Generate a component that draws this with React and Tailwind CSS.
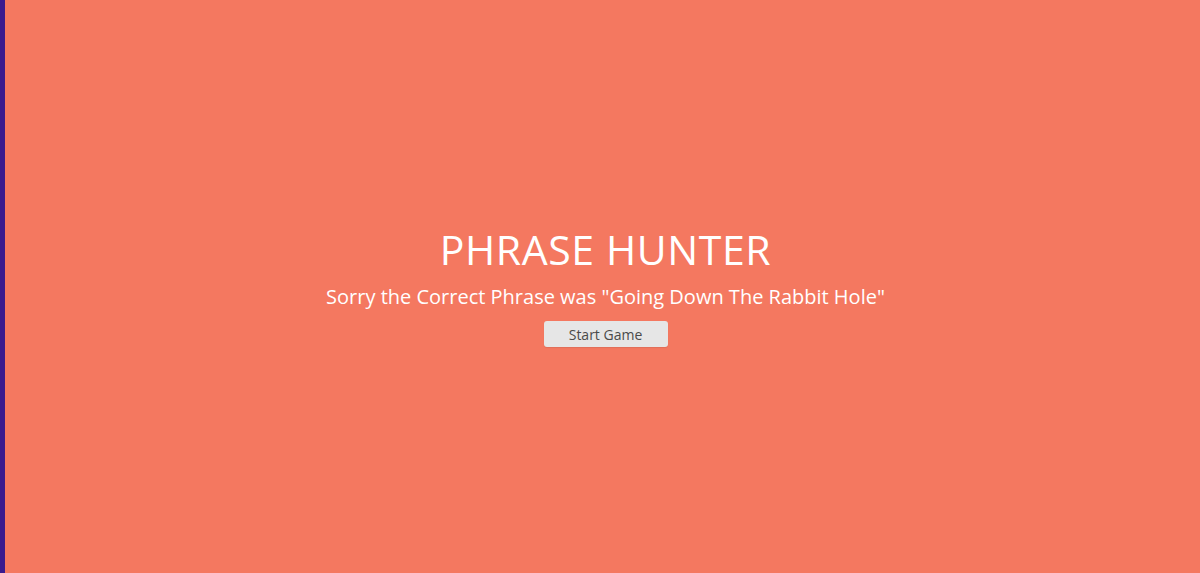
import React from "react";

const App = () => {
  return (
    <div className="flex h-[573px] w-full bg-[#3a1a8e]">
      {/* overlay */}
      <div
        className="ml-[5px] flex flex-1 flex-col items-center justify-center bg-[#f47860] pl-[6px] text-white"
        style={{ fontFamily: '"Open Sans", "DejaVu Sans", sans-serif' }}
      >
        <h2 className="text-[41px] leading-[46px] font-normal tracking-[0.6px]">PHRASE HUNTER</h2>
        <h1 className="mt-[12px] text-[20px] leading-[26px] font-normal">
          Sorry the Correct Phrase was "Going Down The Rabbit Hole"
        </h1>
        <button className="mt-[11px] h-[26px] w-[124px] rounded-[3px] bg-[#e6e6e6] text-[14px] text-[#4a4a4a] shadow-[0_1px_1px_rgba(0,0,0,0.08)]">
          Start Game
        </button>
      </div>
    </div>
  );
};

export default App;
